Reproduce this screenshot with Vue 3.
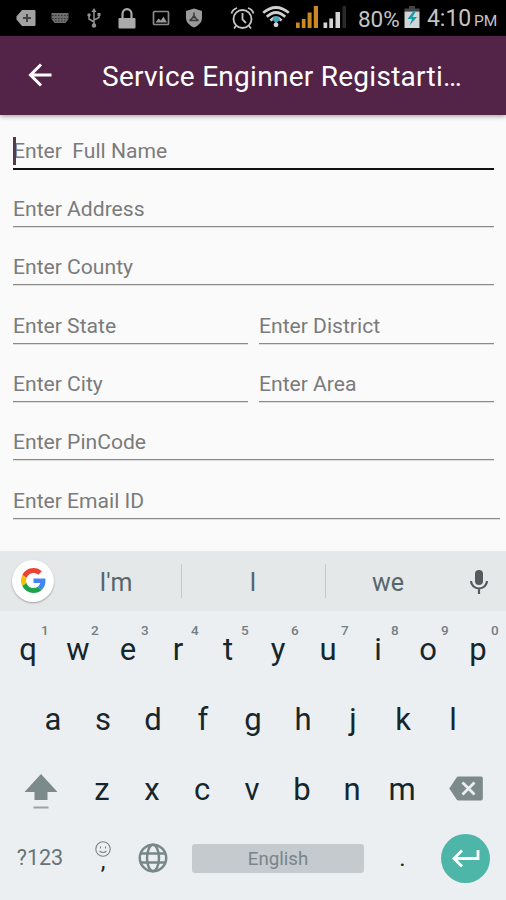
<script setup>
import { ref } from 'vue';

const fieldRows = [
  [{ id: 'name', hint: 'Enter  Full Name' }],
  [{ id: 'address', hint: 'Enter Address' }],
  [{ id: 'county', hint: 'Enter County' }],
  [{ id: 'state', hint: 'Enter State' }, { id: 'district', hint: 'Enter District' }],
  [{ id: 'city', hint: 'Enter City' }, { id: 'area', hint: 'Enter Area' }],
  [{ id: 'pin', hint: 'Enter PinCode' }],
  [{ id: 'email', hint: 'Enter Email ID', wide: true }]
];

const focused = ref('name');

const suggestions = ["I'm", 'I', 'we'];
const topKeys = 'qwertyuiop'.split('').map((letter, i) => ({ letter, digit: (i + 1) % 10 }));
const middleKeys = 'asdfghjkl'.split('');
const bottomKeys = 'zxcvbnm'.split('');
</script>

<template>
  <div class="phone">
    <div class="status-bar">
      <div class="notifications">
        <svg width="20" height="18" viewBox="0 0 20 18">
          <path d="M6 1h12.500q1 0 1 1v14q0 1-1 1H6L.5 10.500V7.500z" fill="#a2a2a2" />
          <path d="M11 5v8M7 9h8" stroke="#444" stroke-width="2" />
        </svg>
        <svg width="18" height="12" viewBox="0 0 18 12">
          <path d="M.5 1h17v6l-3 4h-11l-3-4z" fill="#6c6c6c" />
          <path d="M1 3.500h16M1 6.500h16M4 9h10" stroke="#353535" stroke-width="1" stroke-dasharray="1.500 1.500" />
        </svg>
        <svg width="14" height="20" viewBox="0 0 14 20">
          <path d="M7 17V3M7 14L2 11V7M7 12l5-2.500V6" fill="none" stroke="#929292" stroke-width="1.500" />
          <path d="M7 0l2.500 4h-5z" fill="#929292" />
          <circle cx="7" cy="17.500" r="2.200" fill="#929292" />
          <circle cx="2" cy="7" r="1.700" fill="#929292" />
          <path d="M10.500 5h3v3h-3z" fill="#929292" />
        </svg>
        <svg width="18" height="21" viewBox="0 0 18 21">
          <path d="M4.500 11V6a4.500 4.800 0 0 1 9 0v5" fill="none" stroke="#aaa" stroke-width="2.200" />
          <rect x=".5" y="10" width="17" height="10.500" rx="1" fill="#aaa" />
        </svg>
        <svg width="18" height="16" viewBox="0 0 18 16">
          <rect x="1.500" y="1.500" width="15" height="13" rx="1" fill="none" stroke="#8a8a8a" stroke-width="1.700" />
          <path d="M3.500 12.500l3-4 2.300 2 2.700-4 3.500 6z" fill="#999" />
        </svg>
        <svg width="18" height="20" viewBox="0 0 18 20">
          <path d="M9 .5l8 2.500v7q0 6-8 9.500Q1 16 1 10V3z" fill="#9c9c9c" />
          <path d="M9 4.500v6M9 7.500l-3.500 5h7zM4.500 12.500L7 11M13.500 12.500L11 11" fill="none" stroke="#3c3c3c" stroke-width="1.500" />
        </svg>
      </div>
      <svg class="alarm" width="25" height="24" viewBox="0 0 25 24">
        <circle cx="12.500" cy="13" r="9" fill="none" stroke="#c4c4c4" stroke-width="1.800" />
        <path d="M12.500 7v6.500l3.500 3.500M1.500 7.500Q2.500 3.500 7 2M23.500 7.500Q22.500 3.500 18 2M6 20l-2 2.500M19 20l2 2.500" fill="none" stroke="#c4c4c4" stroke-width="1.800" />
      </svg>
      <svg class="wifi" width="28" height="22" viewBox="0 0 28 22">
        <g fill="none" stroke="#d0d0d0" stroke-width="2.700">
          <path d="M1.200 6.800Q14-3.800 26.800 6.800" />
          <path d="M4.800 10.800Q14 2.200 23.200 10.800" />
          <path d="M8.500 14.500Q14 8.800 19.500 14.500" />
        </g>
        <path d="M11.500 10.500h5l1.500 3-4 4-3.500-4z" fill="#45a5bd" />
        <circle cx="14" cy="18.800" r="2.400" fill="#d5d5d5" />
      </svg>
      <svg class="signal" width="24" height="24" viewBox="0 0 24 24">
        <path d="M1 17.500h3.700V23H1zM6.800 14h3.700v9H6.800zM12.600 7.500h4V23h-4zM18.800 1h4.200v22h-4.200z" fill="#ca8925" />
      </svg>
      <svg class="signal second" width="24" height="24" viewBox="0 0 24 24">
        <path d="M.5 17.500h3.700V23H.5zM6.300 13.500H10V23H6.300zM12.500 7H17v16h-4.500z" fill="#d5d5d5" />
        <path d="M19.500 1h3.500v22h-3.500z" fill="#292929" />
      </svg>
      <span class="percent">80%</span>
      <svg class="battery" width="16" height="23" viewBox="0 0 16 23">
        <path d="M5 0h6v3H5z" fill="#444" />
        <path d="M.5 2.500h15v3H.5z" fill="#444" />
        <path d="M.5 5.500h15V22H.5z" fill="#d0d5d5" />
        <path d="M10 4.500L3.500 13H8l-2.500 6.500L13 11H8.500L12 5z" fill="#149cae" />
      </svg>
      <span class="clock">4:10</span>
      <span class="meridiem">PM</span>
    </div>

    <header class="app-bar">
      <svg class="back" width="24" height="24" viewBox="0 0 24 24">
        <path d="M23.500 12H2.500M13 1.500L2.500 12 13 22.500" fill="none" stroke="#fff" stroke-width="3" />
      </svg>
      <h1>Service Enginner Registarti…</h1>
    </header>

    <main class="form">
      <div v-for="(row, i) in fieldRows" :key="i" class="field-row">
        <div
          v-for="field in row"
          :key="field.id"
          class="field"
          :class="{ focused: focused === field.id, wide: field.wide }"
          @click="focused = field.id"
        >
          <span>{{ field.hint }}</span>
        </div>
      </div>
    </main>

    <section class="keyboard">
      <div class="suggestions">
        <div class="google">
          <svg width="25" height="25" viewBox="0 0 48 48">
            <path fill="#ea4335" d="M24 9.500c3.540 0 6.710 1.220 9.210 3.600l6.850-6.850C35.900 2.380 30.470 0 24 0 14.620 0 6.510 5.380 2.560 13.220l7.980 6.190C12.430 13.720 17.740 9.500 24 9.500z" />
            <path fill="#4285f4" d="M46.980 24.550c0-1.570-.15-3.090-.38-4.550H24v9.020h12.940c-.58 2.960-2.260 5.480-4.780 7.180l7.730 6c4.510-4.180 7.090-10.360 7.090-17.650z" />
            <path fill="#fbbc05" d="M10.530 28.590c-.48-1.450-.76-2.990-.76-4.590s.27-3.140.76-4.590l-7.980-6.190C.92 16.460 0 20.120 0 24c0 3.880.92 7.540 2.560 10.780l7.970-6.190z" />
            <path fill="#1ea24a" d="M24 48c6.480 0 11.930-2.130 15.890-5.810l-7.730-6c-2.150 1.450-4.920 2.300-8.160 2.300-6.260 0-11.570-4.220-13.470-9.910l-7.980 6.190C6.510 42.620 14.620 48 24 48z" />
          </svg>
        </div>
        <div class="words">
          <span v-for="word in suggestions" :key="word">{{ word }}</span>
        </div>
        <svg class="mic" width="20" height="26" viewBox="0 0 20 26">
          <rect x="6" y="1" width="8" height="15" rx="4" fill="#555a5c" />
          <path d="M2 12a8 7.500 0 0 0 16 0M10 19.500V25" fill="none" stroke="#555a5c" stroke-width="2.200" />
        </svg>
      </div>

      <div class="keys top">
        <div v-for="key in topKeys" :key="key.letter" class="key">
          {{ key.letter }}<sup>{{ key.digit }}</sup>
        </div>
      </div>

      <div class="keys middle">
        <div v-for="key in middleKeys" :key="key" class="key">{{ key }}</div>
      </div>

      <div class="keys bottom">
        <div class="key">
          <svg class="shift" width="34" height="37" viewBox="0 0 34 37">
            <path d="M17 1l16.500 18H23.500v8h-13v-8H.5z" fill="#7d8a8b" />
            <path d="M9.500 34.500h15" stroke="#9aa3a5" stroke-width="2" />
          </svg>
        </div>
        <div v-for="key in bottomKeys" :key="key" class="key">{{ key }}</div>
        <div class="key">
          <svg class="delete" width="34" height="25" viewBox="0 0 34 25">
            <path d="M9.500.5H32q1.800 0 1.800 1.800v20.400q0 1.800-1.800 1.800H9.500q-1.200 0-1.900-1L.3 12.500 7.600 1.500q.7-1 1.900-1z" fill="#7d8a8b" />
            <path d="M13.500 6.500l12 12M25.500 6.500l-12 12" stroke="#eceff1" stroke-width="2.800" />
          </svg>
        </div>
      </div>

      <div class="keys actions">
        <div class="key symbols">?123</div>
        <div class="key comma">
          <svg width="16" height="16" viewBox="0 0 16 16">
            <circle cx="8" cy="8" r="7.200" fill="none" stroke="#7c8385" stroke-width="1.100" />
            <path d="M5.500 5.500v2M10.500 5.500v2M4.500 10Q8 13 11.500 10" fill="none" stroke="#7c8385" stroke-width="1.100" />
          </svg>
          <span>,</span>
        </div>
        <div class="key">
          <svg width="30" height="30" viewBox="0 0 30 30">
            <g fill="none" stroke="#78878a" stroke-width="2.500">
              <circle cx="15" cy="15" r="13.200" />
              <ellipse cx="15" cy="15" rx="6" ry="13.200" />
              <path d="M3 10.500h24M3 19.500h24" />
            </g>
          </svg>
        </div>
        <div class="space">English</div>
        <div class="key period">.</div>
        <div class="enter">
          <svg width="28" height="18" viewBox="0 0 28 18">
            <path d="M26 1v8.500H2.500M10 1.500l-8 8 8 8" fill="none" stroke="#fff" stroke-width="2.800" />
          </svg>
        </div>
      </div>
    </section>
  </div>
</template>

<style>
body {
  margin: 0;
  background: #fafafa;
}
</style>

<style scoped>
.phone {
  width: 506px;
  height: 900px;
  display: flex;
  flex-direction: column;
  overflow: hidden;
  background: #fafafa;
  font-family: Roboto, 'Liberation Sans', sans-serif;
}

svg {
  display: block;
  flex: none;
}

.status-bar {
  height: 36px;
  flex: none;
  display: flex;
  align-items: center;
  background: #000;
  color: #c4c4c4;
  white-space: nowrap;
}

.notifications {
  display: grid;
  grid-template-columns: repeat(6, 33.6px);
  place-items: center;
  margin-left: 9.7px;
  margin-right: 18.7px;
}

.wifi {
  margin: 0 5px 3px 7px;
}

.signal {
  margin-bottom: 2px;
}

.signal.second {
  margin-left: 4px;
}

.percent {
  width: 46px;
  margin-left: 11px;
  font-size: 22.500px;
  line-height: 24px;
  padding-top: 1px;
}

.battery {
  margin-bottom: 1px;
}

.clock {
  width: 47px;
  margin-left: 7px;
  font-size: 23px;
  line-height: 24px;
  padding-top: 2px;
}

.meridiem {
  font-size: 15.500px;
  padding-top: 5px;
}

.app-bar {
  height: 78.500px;
  flex: none;
  display: flex;
  align-items: center;
  position: relative;
  background: #532447;
  box-shadow: 0 1px 5px rgba(0, 0, 0, 0.4);
  color: #fff;
}

.back {
  margin: 0 0 0 28px;
}

.app-bar h1 {
  margin: 2px 0 0 50px;
  font-size: 28px;
  font-weight: 400;
  letter-spacing: 0.270px;
  white-space: nowrap;
}

.form {
  height: 436px;
  flex: none;
  padding: 15px 12px 0 13px;
  box-sizing: border-box;
}

.field-row {
  display: flex;
  gap: 11px;
  height: 40px;
  margin-bottom: 18.350px;
}

.field {
  flex: 1;
  box-sizing: border-box;
  height: 39px;
  border-bottom: 1.500px solid #8a8a8a;
  box-shadow: 0 1px 0 #dedede;
  color: #7b7b7b;
  font-size: 21.100px;
  line-height: 42.400px;
  white-space: pre;
}

.field.focused {
  height: 40px;
  border-bottom: 2px solid #111;
  box-shadow: none;
  line-height: 41px;
}

.field.focused::before {
  content: '';
  position: absolute;
  width: 2.500px;
  height: 28px;
  margin-top: 7px;
  background: #533b4e;
}

.field.wide {
  margin-right: -6px;
}

.keyboard {
  flex: 1;
  background: #eceff1;
  color: #15262d;
}

.suggestions {
  height: 60.500px;
  display: flex;
  align-items: center;
  background: #e4e8e9;
  color: #56666c;
}

.google {
  width: 42px;
  height: 42px;
  margin-left: 12px;
  display: flex;
  align-items: center;
  justify-content: center;
  border-radius: 50%;
  background: #fff;
  box-shadow: 0 1px 2px rgba(0, 0, 0, 0.3);
}

.words {
  display: grid;
  grid-template-columns: 130px 144px 126px;
  margin-left: -3px;
  font-size: 25px;
  line-height: 37px;
  height: 34px;
  text-align: center;
}

.words span {
  height: 34px;
}

.words span + span {
  box-shadow: inset 1px 0 0 #c3c8ca;
}

.mic {
  margin: 2px 0 0 18px;
}

.keys {
  height: 70px;
  display: grid;
  align-items: center;
  font-size: 31px;
}

.key {
  display: flex;
  align-items: center;
  justify-content: center;
  line-height: 70px;
  position: relative;
}

.top {
  grid-template-columns: repeat(10, 50px);
  padding: 4px 3px 0;
}

.top sup {
  position: absolute;
  top: 7px;
  left: 38px;
  font-size: 13.500px;
  font-weight: 500;
  line-height: 16px;
  color: #737f83;
}

.middle {
  grid-template-columns: repeat(9, 50px);
  padding-left: 28px;
}

.bottom {
  grid-template-columns: 73px repeat(7, 50px) 79px;
  padding-left: 4px;
}

.shift {
  margin-top: 3px;
}

.delete {
  margin: 0 1px 3px 0;
}

.actions {
  grid-template-columns: 73px 50px 50px 186px 77px 49px;
  grid-template-rows: 66px;
  padding-left: 5px;
  height: 66px;
}

.symbols {
  padding-right: 3px;
  font-size: 21.500px;
  line-height: 66px;
  color: #667479;
}

.comma {
  flex-direction: column;
  line-height: 16px;
  font-size: 24px;
}

.comma svg {
  margin-top: -4px;
}

.comma span {
  height: 18px;
  margin-top: -4px;
}

.space {
  height: 29px;
  margin-left: 14px;
  border-radius: 3px;
  background: #c5cacf;
  color: #78858a;
  font-size: 18.700px;
  line-height: 30px;
  text-align: center;
}

.period {
  font-size: 24px;
  line-height: 66px;
}

.enter {
  width: 49px;
  height: 49px;
  display: flex;
  align-items: center;
  justify-content: center;
  border-radius: 50%;
  background: #4db6a8;
}
</style>
